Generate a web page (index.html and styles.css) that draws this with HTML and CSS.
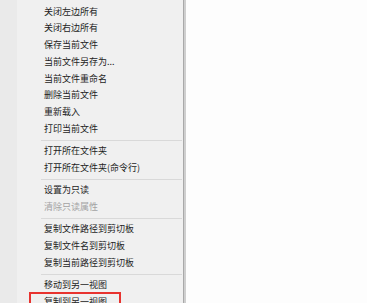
FILE: index.html
```html
<!DOCTYPE html>
<html lang="zh-CN">
<head>
<meta charset="utf-8">
<link rel="stylesheet" href="styles.css">
</head>
<body>
<div class="page">
  <div class="strip"></div>
  <div class="menu">
    <div class="item">关闭左边所有</div>
    <div class="item">关闭右边所有</div>
    <div class="item">保存当前文件</div>
    <div class="item">当前文件另存为...</div>
    <div class="item">当前文件重命名</div>
    <div class="item">删除当前文件</div>
    <div class="item">重新载入</div>
    <div class="item">打印当前文件</div>
    <div class="sep"></div>
    <div class="item">打开所在文件夹</div>
    <div class="item">打开所在文件夹(命令行)</div>
    <div class="sep"></div>
    <div class="item">设置为只读</div>
    <div class="item disabled">清除只读属性</div>
    <div class="sep"></div>
    <div class="item">复制文件路径到剪切板</div>
    <div class="item">复制文件名到剪切板</div>
    <div class="item">复制当前路径到剪切板</div>
    <div class="sep"></div>
    <div class="item">移动到另一视图</div>
    <div class="item marked">复制到另一视图<span class="redbox"></span></div>
  </div>
  <div class="edge"></div>
  <div class="content"></div>
</div>
</body>
</html>
```
FILE: styles.css
```css
html, body {
  margin: 0;
  padding: 0;
  background: #fdfdfd;
}
.page {
  display: flex;
  height: 303px;
  overflow: hidden;
  font-family: "Noto Sans CJK SC", "Noto Sans", sans-serif;
  font-size: 9px;
  color: #1c1c1c;
}
.strip {
  width: 17px;
  flex: none;
  background: #eaeaea;
}
.menu {
  width: 142px;
  flex: none;
  background: #f0f0f0;
  padding: 3.6px 1px 0 23px;
  border-right: 1px solid #a9a9a9;
}
.item {
  position: relative;
  height: 16.75px;
  line-height: 16.75px;
  padding-left: 4px;
  white-space: nowrap;
}
.item.disabled {
  color: #a3a3a3;
}
.sep {
  height: 1px;
  margin: 2.25px 0 2.25px 1px;
  background: #d9d9d9;
  border-bottom: 0;
}
.redbox {
  position: absolute;
  left: -11px;
  top: -1.3px;
  width: 88px;
  height: 20px;
  border: 2px solid #e8332f;
}
.edge {
  width: 2px;
  flex: none;
  background: #cfcfcf;
}
.content {
  flex: 1;
  background: #fdfdfd;
}
```
